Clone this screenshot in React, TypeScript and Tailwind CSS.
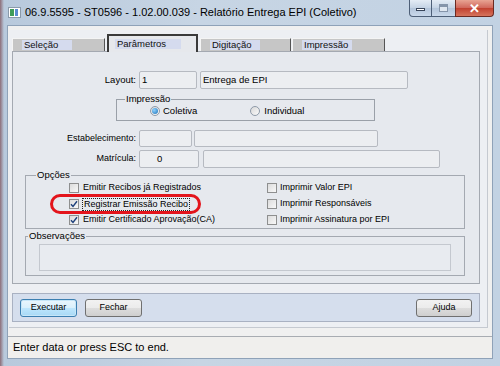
import React from 'react'

const ui = "font-['Liberation_Sans',Arial,sans-serif]"

function Field({ cls, children }: { cls: string; children?: React.ReactNode }) {
  return (
    <div className={`flex items-center rounded-[2px] border border-[#b6bac1] bg-[#eceef1] px-[2px] text-[9.5px] text-black ${cls}`}>
      {children}
    </div>
  )
}

function Check({ checked = false }: { checked?: boolean }) {
  return (
    <span className="flex h-[10px] w-[10px] shrink-0 items-center justify-center border border-[#8e8f8f] bg-[linear-gradient(135deg,#dcdcdc,#f8f8f8)]">
      {checked && (
        <svg width="8" height="8" viewBox="0 0 8 8">
          <path d="M1 4.2 L3 6.4 L7 1.2" fill="none" stroke="#1c3f7a" strokeWidth="1.4" />
        </svg>
      )}
    </span>
  )
}

function Radio({ on = false }: { on?: boolean }) {
  return (
    <span className="flex h-[10px] w-[10px] shrink-0 items-center justify-center rounded-full border border-[#8e9aa8] bg-[linear-gradient(135deg,#d8d8d8,#fafafa)]">
      {on && <span className="h-[6px] w-[6px] rounded-full bg-[radial-gradient(circle_at_35%_35%,#8fd3ff,#1d6fb5)]" />}
    </span>
  )
}

function Tab({ label, active = false, cls }: { label: string; active?: boolean; cls: string }) {
  return (
    <div
      className={
        active
          ? `relative z-10 -mb-px flex h-[18px] items-center border-2 border-b-0 border-[#3a3a3a] bg-[#e6e8ec] pl-[6px] ${cls}`
          : `mt-[4px] flex h-[13px] items-center border border-b-0 border-[#f4f4f4] border-r-[#555] bg-[#c6c6c6] pl-[9px] ${cls}`
      }
    >
      <span className={`flex h-[10px] items-center bg-[#d5dbee] pl-[2px] text-[9.5px] leading-none text-[#111] ${active ? 'w-[66px]' : 'w-[50px]'}`}>
        {label}
      </span>
    </div>
  )
}

function Btn({ label, focus = false, cls }: { label: string; focus?: boolean; cls: string }) {
  return (
    <div
      className={`flex h-[18px] items-center justify-center rounded-[3px] border text-[9px] text-black ${
        focus
          ? 'border-[#3c7fb1] bg-[linear-gradient(180deg,#eaf6fd,#d9f0fc_50%,#bee6fd_51%,#a7d9f5)] shadow-[inset_0_0_0_1px_#c6e6f8]'
          : 'border-[#707070] bg-[linear-gradient(180deg,#f2f2f2,#ebebeb_50%,#dddddd_51%,#cfcfcf)]'
      } ${cls}`}
    >
      {label}
    </div>
  )
}

export default function App() {
  return (
    <div className={`relative h-[366px] w-[500px] overflow-hidden bg-[linear-gradient(90deg,#8c6d78_0px,#b8c9dc_4px,#c7d5e4_40%,#c2d2e3)] ${ui}`}>
      {/* title bar */}
      <div className="flex h-[25px] items-start">
        <div className="ml-[8px] mt-[7px] flex h-[11px] w-[13px] items-center border border-[#8a9aaa] bg-white">
          <span className="ml-[1px] h-[7px] w-[4px] bg-[#3f9b59]" />
          <span className="ml-[1px] h-[7px] w-[3px] bg-[#5b8bd0]" />
        </div>
        <div className="ml-[4px] mt-[6px] text-[11px] leading-[13px] text-black">
          06.9.5595 - ST0596 - 1.02.00.039 - Relatório Entrega EPI (Coletivo)
        </div>
        <div className="ml-auto mr-[6px] flex h-[17px] items-stretch">
          <div className="flex w-[23px] items-center justify-center rounded-bl-[4px] border border-t-0 border-[#4d5f77] bg-[linear-gradient(180deg,#e4ecf5,#c4d3e4_50%,#b3c5da_51%,#c9d8ea)]">
            <span className="mt-[3px] h-[3px] w-[9px] border border-[#39465a] bg-white" />
          </div>
          <div className="flex w-[23px] items-center justify-center border-b border-[#4d5f77] bg-[linear-gradient(180deg,#e4ecf5,#c4d3e4_50%,#b3c5da_51%,#c9d8ea)]">
            <span className="h-[8px] w-[9px] border border-[#8595aa] border-t-[3px] bg-[#dfe7f0]" />
          </div>
          <div className="flex w-[39px] items-center justify-center rounded-br-[4px] border border-t-0 border-[#6b2a22] bg-[linear-gradient(180deg,#e8a493,#d0665a_50%,#c1402f_51%,#d6735c)] text-[13px] font-bold leading-none text-white">
            ✕
          </div>
        </div>
      </div>

      {/* client area */}
      <div className="ml-[7px] flex h-[334px] w-[486px] flex-col border border-[#8fa2b8] bg-[#f0f0f0]">
        <div className="ml-px mt-[4px] flex h-[298px] w-[479px] flex-col border-r border-b border-[#c5c9d0] bg-[#edeff3] pl-[3px] pt-[4px]">
          {/* tabs */}
          <div className="flex h-[17px] items-start">
            <Tab label="Seleção" cls="w-[93px]" />
            <Tab label="Parâmetros" active cls="ml-[2px] w-[91px]" />
            <Tab label="Digitação" cls="ml-[2px] w-[91px]" />
            <Tab label="Impressão" cls="ml-px w-[93px]" />
          </div>

          {/* panel */}
          <div className="flex h-[233px] w-[468px] flex-col border border-[#a4a9b1] bg-[#e6e9ee] text-[9px] text-black">
            <div className="mt-[19px] flex h-[18px] items-stretch">
              <div className="flex w-[123px] items-center justify-end text-[9.5px]">Layout:</div>
              <Field cls="ml-[3px] w-[58px]">1</Field>
              <Field cls="ml-[3px] w-[208px]">Entrega de EPI</Field>
            </div>

            <div className="relative ml-[103px] mt-[10px] flex h-[22px] w-[259px] items-center border border-[#9aa0a8] bg-[#e6e9ee] text-[9.5px]">
              <span className="absolute -top-[7px] left-[8px] bg-[#e6e9ee] px-px leading-[12px]">Impressão</span>
              <div className="ml-[33px] mt-[2px] flex items-center gap-[3px]">
                <Radio on />
                <span>Coletiva</span>
              </div>
              <div className="ml-[53px] mt-[2px] flex items-center gap-[4px]">
                <Radio />
                <span>Individual</span>
              </div>
            </div>

            <div className="mt-[9px] flex h-[17px] items-stretch">
              <div className="flex w-[123px] items-center justify-end">Estabelecimento:</div>
              <Field cls="ml-[3px] w-[53px]" />
              <Field cls="ml-[2px] w-[184px]" />
            </div>

            <div className="mt-[3px] flex h-[18px] items-stretch">
              <div className="flex w-[123px] items-center justify-end">Matrícula:</div>
              <Field cls="ml-[3px] w-[60px] pl-[17px]">0</Field>
              <Field cls="ml-[4px] w-[237px]" />
            </div>

            <div className="relative ml-[12px] mt-[7px] flex h-[54px] w-[440px] border border-[#a4a9b1]">
              <span className="absolute -top-[7px] left-[10px] bg-[#e6e9ee] px-px text-[9.5px] leading-[12px]">Opções</span>
              <div className="ml-[43px] mt-[4px] flex flex-col">
                <div className="flex h-[16px] items-center gap-[4px]">
                  <Check />
                  <span>Emitir Recibos já Registrados</span>
                </div>
                <div className="flex h-[16px] items-center gap-[3px]">
                  <Check checked />
                  <span className="border border-dotted border-[#222] px-px leading-[11px]">Registrar Emissão Recibo</span>
                </div>
                <div className="flex h-[16px] items-center gap-[4px]">
                  <Check checked />
                  <span>Emitir Certificado Aprovação(CA)</span>
                </div>
              </div>
              <div className="ml-auto mr-[62px] mt-[4px] flex w-[135px] flex-col">
                <div className="flex h-[16px] items-center gap-[3px]">
                  <Check />
                  <span>Imprimir Valor EPI</span>
                </div>
                <div className="flex h-[16px] items-center gap-[3px]">
                  <Check />
                  <span>Imprimir Responsáveis</span>
                </div>
                <div className="flex h-[16px] items-center gap-[3px]">
                  <Check />
                  <span>Imprimir Assinatura por EPI</span>
                </div>
              </div>
              {/* red annotation */}
              <div className="absolute left-[24px] top-[18px] h-[20px] w-[151px] rounded-full border-[3px] border-[#e3141b]" />
            </div>

            <div className="relative ml-[12px] mt-[7px] flex h-[40px] w-[440px] flex-col border border-[#a4a9b1]">
              <span className="absolute -top-[7px] left-[2px] bg-[#e6e9ee] px-px text-[9.5px] leading-[12px]">Observações</span>
              <div className="ml-[13px] mt-[7px] h-[27px] w-[412px] border border-[#c4c8cf] bg-[#e8ebf0]" />
            </div>
          </div>

          {/* button bar */}
          <div className="mt-[9px] flex h-[29px] w-[468px] items-center border border-[#a9b1c2] bg-[#d5deed]">
            <Btn label="Executar" focus cls="ml-[7px] w-[57px]" />
            <Btn label="Fechar" cls="ml-[8px] w-[57px]" />
            <Btn label="Ajuda" cls="ml-auto mr-[7px] w-[56px]" />
          </div>
        </div>

        {/* status bar */}
        <div className="mt-[8px] flex h-[22px] items-center border-t border-[#a8acb2] bg-[#f0efed] pl-[5px] text-[11px] text-black">
          Enter data or press ESC to end.
        </div>
      </div>
    </div>
  )
}
